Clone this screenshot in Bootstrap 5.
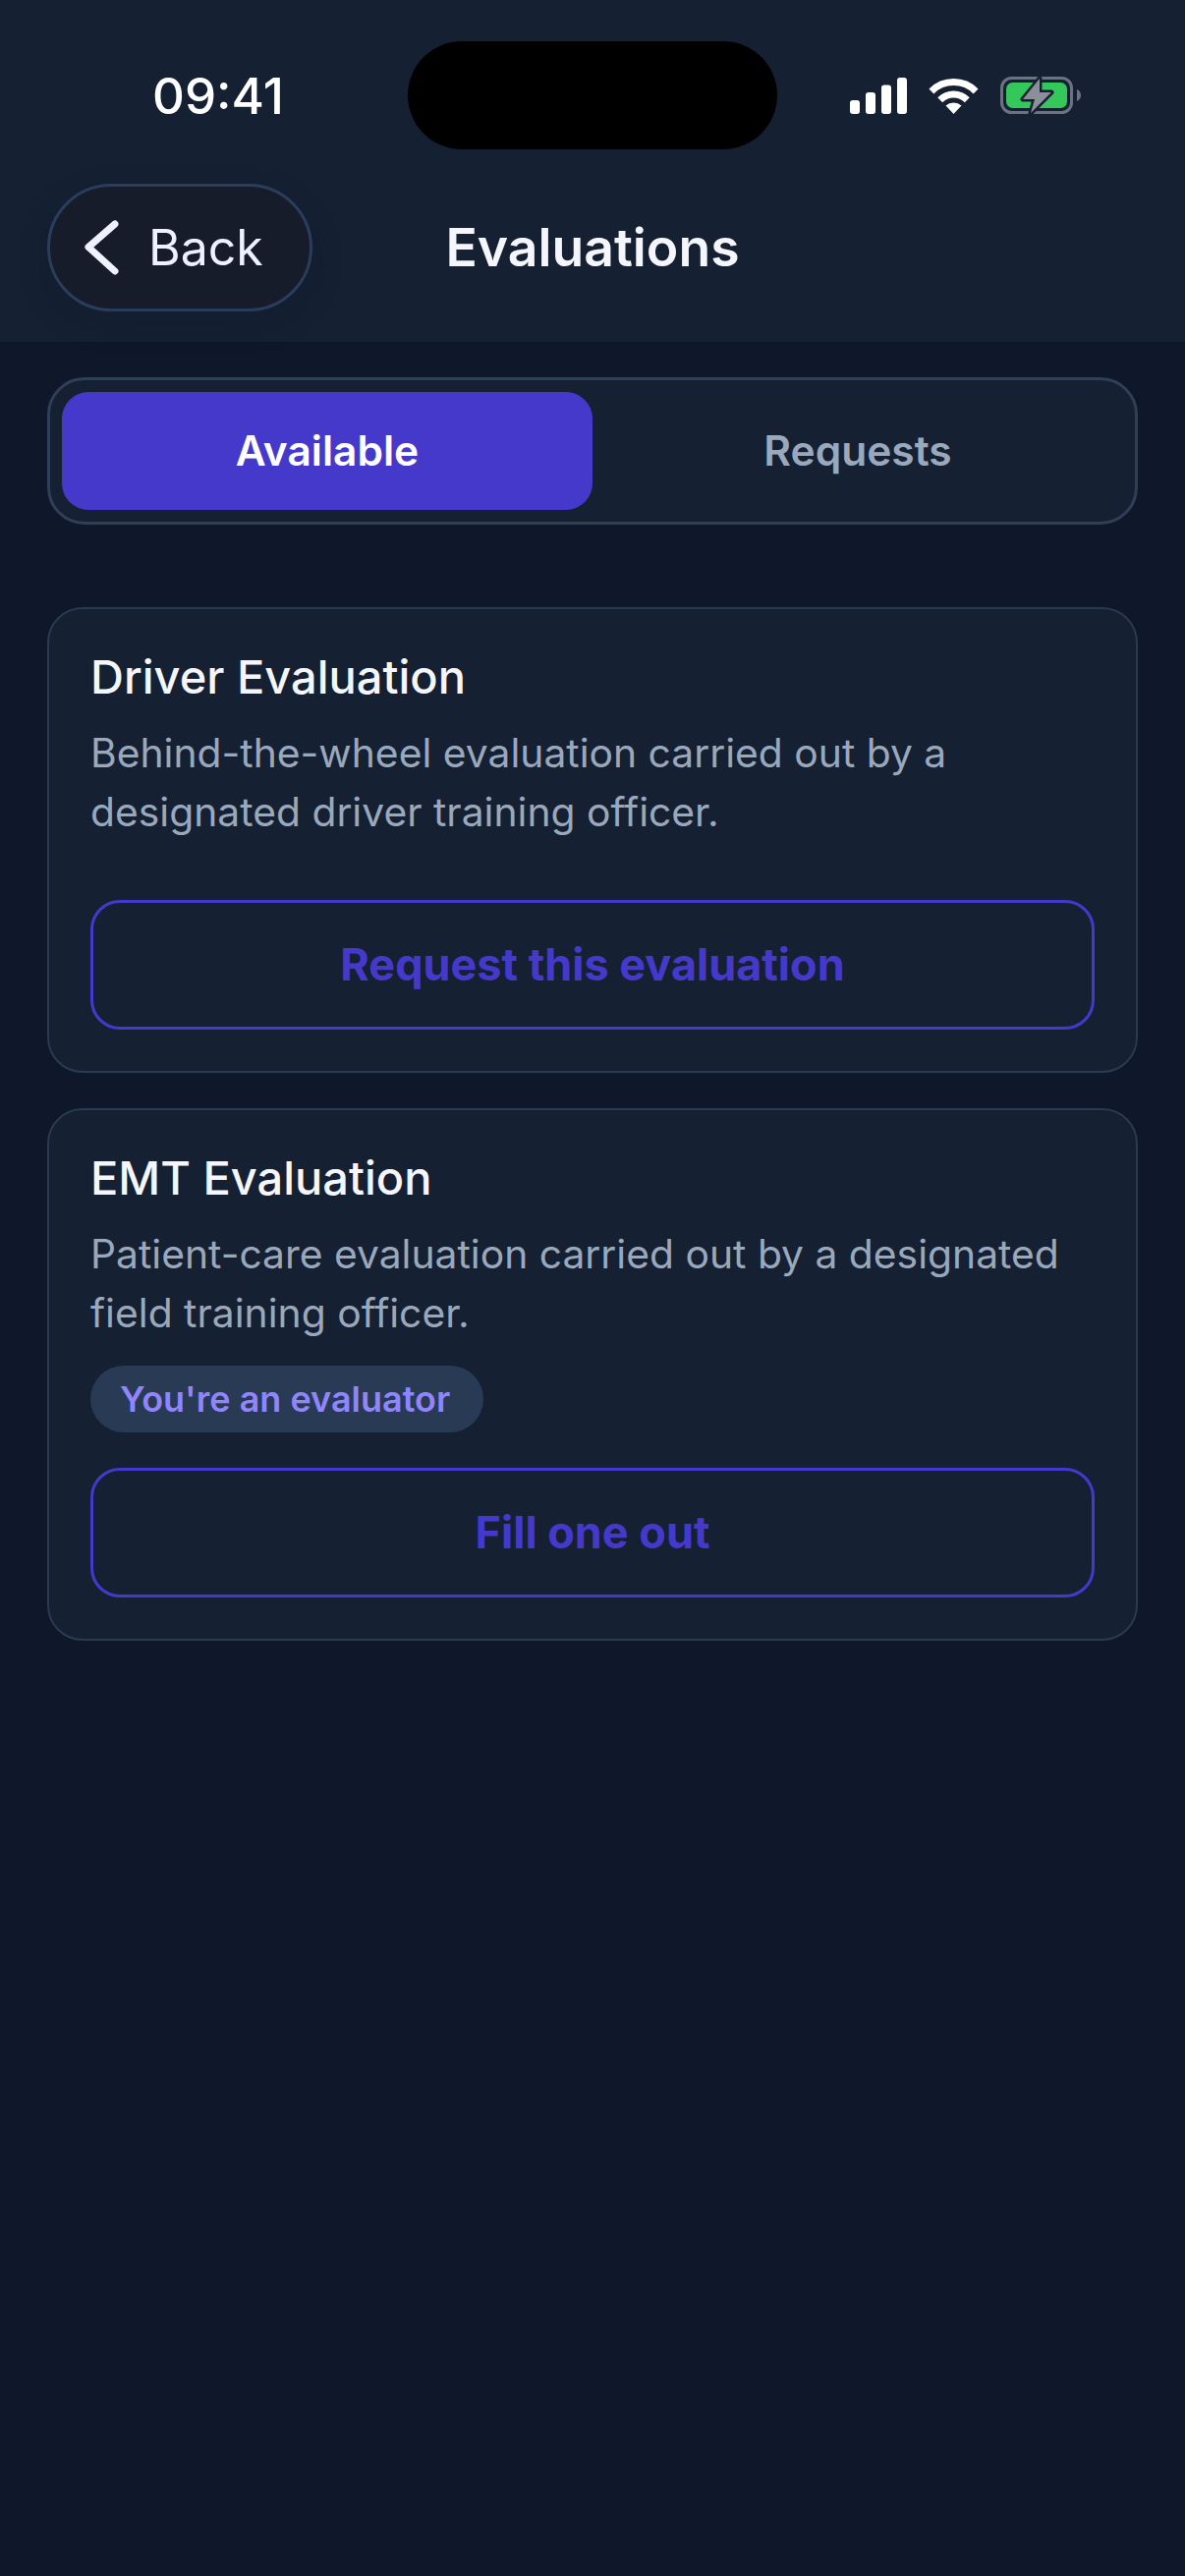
<!DOCTYPE html>
<html lang="en">

<head>
    <meta charset="UTF-8">
    <meta name="viewport" content="width=device-width, initial-scale=1.0">
    <title>Evaluations</title>
    <link href="https://cdn.jsdelivr.net/npm/bootstrap@5.3.3/dist/css/bootstrap.min.css" rel="stylesheet">
    <style>
        body {
            background: #0f172a;
            font-family: Inter, "Liberation Sans", sans-serif;
            color: #f1f5f9;
            min-height: 2622px;
        }

        /* header + status bar */
        .app-header { background: #152032; height: 348px; padding-top: 42px; }
        .status-row { display: grid; grid-template-columns: 415px 376px 415px; height: 110px; align-items: center; }
        .status-time { font-size: 51px; font-weight: 500; color: #fff; padding-left: 155px; line-height: 1; }
        .status-island { height: 110px; background: #000; border-radius: 55px; }
        .status-icons { padding-left: 74px; }
        .status-icons svg + svg { margin-left: 22px; }
        .nav-row { display: grid; grid-template-columns: 1fr auto 1fr; align-items: center; height: 130px; margin-top: 35px; padding: 0 48px; }
        .back-btn {
            --bs-btn-color: #eef2ff;
            --bs-btn-bg: #161c2a;
            --bs-btn-border-color: #2a3d5c;
            --bs-btn-hover-color: #eef2ff;
            --bs-btn-hover-bg: #161c2a;
            --bs-btn-hover-border-color: #2a3d5c;
            --bs-btn-border-width: 3px;
            width: 270px;
            height: 130px;
            border-radius: 65px;
            padding: 0 0 0 34px;
            font-size: 50px;
            line-height: 1;
            gap: 30px;
            box-shadow: 0 12px 30px rgba(15, 23, 42, .25);
        }
        .page-title { font-size: 53.5px; font-weight: 600; margin: 0; line-height: 1; color: #f4f6fb; }

        /* tabs */
        .seg-tabs {
            margin: 36px 48px 84px;
            padding: 12px;
            background: #152032;
            border: 3px solid #303f58;
            border-radius: 38px;
        }
        .seg-tabs .nav-link {
            height: 120px;
            border-radius: 27px;
            font-size: 42.5px;
            font-weight: 600;
            color: #9aa8bc;
            display: flex;
            align-items: center;
            justify-content: center;
            padding: 0;
        }
        .seg-tabs .nav-link.active { background: #4539cc; color: #fff; }

        /* cards */
        .eval-list { padding: 0 48px; gap: 36px; }
        .eval-card {
            --bs-card-bg: #152032;
            --bs-card-border-color: #2a3a52;
            --bs-card-border-width: 2px;
            --bs-card-border-radius: 36px;
            --bs-card-inner-border-radius: 34px;
            --bs-card-spacer-x: 42px;
            --bs-card-spacer-y: 42px;
            --bs-card-color: #f1f5f9;
        }
        .eval-card .card-body { padding-top: 40px; }
        .eval-title { font-size: 47px; font-weight: 500; line-height: 58px; margin: 0 0 18px; color: #f4f6fb; }
        .eval-desc { font-size: 40.8px; line-height: 60px; color: #9aa8bc; margin: 0 0 24px; }
        .evaluator-tag {
            --bs-badge-padding-x: 30px;
            --bs-badge-padding-y: 0;
            --bs-badge-font-size: 36px;
            --bs-badge-font-weight: 600;
            --bs-badge-color: #9085fb;
            background: #293a55;
            height: 68px;
            width: 400px;
            display: flex;
            align-items: center;
            line-height: 1;
        }
        .eval-btn {
            --bs-btn-color: #4539cc;
            --bs-btn-border-color: #4539cc;
            --bs-btn-hover-color: #4539cc;
            --bs-btn-hover-bg: transparent;
            --bs-btn-hover-border-color: #4539cc;
            --bs-btn-border-width: 3px;
            height: 132px;
            margin-top: 36px;
            border-radius: 30px;
            font-size: 45px;
            font-weight: 700;
            display: flex;
            align-items: center;
            justify-content: center;
        }
        /* no evaluator tag above the button, the gap stays */
        .eval-desc + .eval-btn { margin-top: 60px; }
    </style>
</head>

<body>
    <header class="app-header">
        <div class="status-row">
            <div class="status-time">09:41</div>
            <div class="status-island"></div>
            <div class="status-icons d-flex align-items-center">
                <!-- signal -->
                <svg width="58" height="37" viewBox="0 0 58 37" fill="#fff">
                    <rect x="0" y="23" width="10" height="14" rx="3" />
                    <rect x="16" y="15" width="10" height="22" rx="3" />
                    <rect x="32" y="7.5" width="10" height="29.5" rx="3" />
                    <rect x="48" y="0" width="10" height="37" rx="3" />
                </svg>
                <!-- wifi -->
                <svg width="51" height="37" viewBox="0 0 51 37">
                    <path d="M2.9 13.9A32 32 0 0 1 48.1 13.9" fill="none" stroke="#fff" stroke-width="7" />
                    <path d="M11.7 22.7A19.5 19.5 0 0 1 39.3 22.7" fill="none" stroke="#fff" stroke-width="7" />
                    <path d="M25.5 37L17.5 28.5A12 12 0 0 1 33.5 28.5Z" fill="#fff" />
                </svg>
                <!-- battery -->
                <svg width="82" height="40" viewBox="0 0 82 40">
                    <rect x="1.5" y="2.5" width="71" height="35" rx="10" fill="none" stroke="#6b7280" stroke-width="3" />
                    <rect x="6" y="7" width="62" height="26" rx="6.5" fill="#34c759" />
                    <path d="M78 14c2.5 1 4 3 4 6s-1.500 5-4 6Z" fill="#6b7280" />
                    <path d="M40 3L23 24H35L31 38L52 17H40Z" fill="#8b8f99" stroke="#152032" stroke-width="5" stroke-linejoin="round" paint-order="stroke" />
                </svg>
            </div>
        </div>
        <div class="nav-row">
            <div>
                <a href="#" class="btn back-btn d-inline-flex align-items-center">
                    <svg width="36" height="56" viewBox="0 0 36 56" fill="none">
                        <path d="M32 4L5 27.5L32 52" stroke="#eef2ff" stroke-width="7" stroke-linecap="round" stroke-linejoin="round" />
                    </svg>
                    <span>Back</span>
                </a>
            </div>
            <h1 class="page-title">Evaluations</h1>
            <div></div>
        </div>
    </header>

    <ul class="nav nav-pills nav-justified flex-nowrap seg-tabs">
        <li class="nav-item"><a class="nav-link active" href="#">Available</a></li>
        <li class="nav-item"><a class="nav-link" href="#">Requests</a></li>
    </ul>

    <main class="d-flex flex-column eval-list">
        <div class="card eval-card">
            <div class="card-body">
                <h2 class="eval-title">Driver Evaluation</h2>
                <p class="eval-desc">Behind-the-wheel evaluation carried out by a designated driver training officer.</p>
                <a href="#" class="btn eval-btn">Request this evaluation</a>
            </div>
        </div>
        <div class="card eval-card">
            <div class="card-body">
                <h2 class="eval-title">EMT Evaluation</h2>
                <p class="eval-desc">Patient-care evaluation carried out by a designated field training officer.</p>
                <span class="badge rounded-pill evaluator-tag">You're an evaluator</span>
                <a href="#" class="btn eval-btn">Fill one out</a>
            </div>
        </div>
    </main>

    <script src="https://cdn.jsdelivr.net/npm/bootstrap@5.3.3/dist/js/bootstrap.bundle.min.js"></script>
</body>

</html>
